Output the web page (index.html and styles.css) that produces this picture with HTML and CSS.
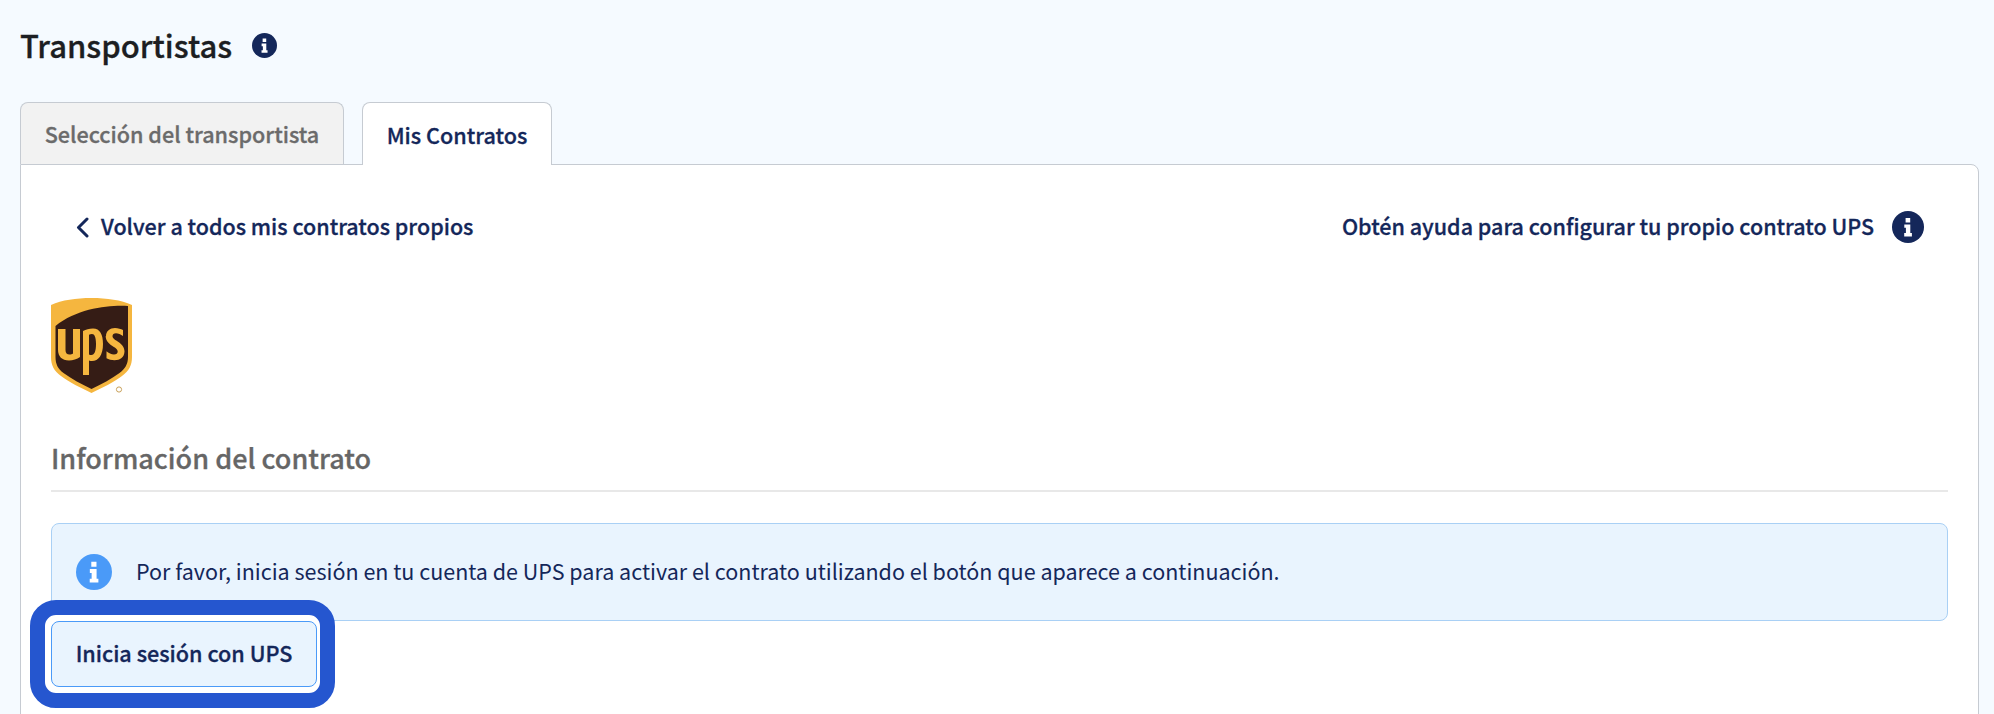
FILE: index.html
```html
<!DOCTYPE html>
<html lang="es">
<head>
<meta charset="utf-8">
<title>Transportistas</title>
<link rel="stylesheet" href="styles.css">
</head>
<body>
<svg class="defs" width="0" height="0" aria-hidden="true">
  <symbol id="info" viewBox="0 0 32 32">
    <circle cx="16" cy="16" r="16" fill="currentColor"/>
    <path fill="#fff" d="M13.6 6.9h4.6v4.5h-4.6zM12.3 13.4h6v8.6h1.6v3.4h-7.7V22h1.7v-5.2h-1.6z"/>
  </symbol>
</svg>
<main class="page">
  <header class="title-row">
    <h1 class="title">Transportistas</h1>
    <svg class="icon-title"><use href="#info"/></svg>
  </header>
  <nav class="tabs">
    <div class="tab">Selección del transportista</div>
    <div class="tab tab-active">Mis Contratos</div>
  </nav>
  <section class="panel">
    <div class="top-row">
      <a class="back">
        <svg class="chevron" viewBox="0 0 14 21"><path d="M12 2 3.500 10.500 12 19" fill="none" stroke="currentColor" stroke-width="3" stroke-linecap="round" stroke-linejoin="round"/></svg>
        <span class="lifted">Volver a todos mis contratos propios</span>
      </a>
      <a class="help">
        <span class="lifted">Obtén ayuda para configurar tu propio contrato UPS</span>
        <svg class="icon-help"><use href="#info"/></svg>
      </a>
    </div>
    <svg class="logo" viewBox="0 0 81 95">
      <path fill="#f5b63f" d="M40.500 0C25 0 11 2 0 7v52c0 8 3 14 10 19 8 6 20 12 30.500 17C51 90 63 84 71 78c7-5 10-11 10-19V7C70 2 56 0 40.500 0z"/>
      <path fill="#351c15" d="M77 8C58 7 27 10 4.500 28v31c0 7 2.500 12 8 16 8 6 18 11 28 16 10-5 20-10 28-16 5.500-4 8.500-9 8.500-16z"/>
      <path fill="#f5b63f" fill-rule="evenodd" d="M7 31h7.500v21c0 3 1.500 4.500 4 4.500 1.500 0 2.500-.3 3.500-1V31H29v28c-3 2-7 3.500-11 3.500-7 0-11-4-11-11zM32 33c3-1.500 6-2.500 10-2.500 7 0 10 6 10 15.500 0 11-4.500 17-11 17-1 0-2 0-3-.5V77h-6zm6 23.500c.8.500 1.500.6 2.500.6 3 0 4.500-4 4.500-11 0-7-1.500-10-4-10-1.200 0-2.200.2-3 .6zM55 38c0-5 4-8 9-8 3 0 6 1 8 2v6c-2-1.500-5-2.800-7-2.800-2.200 0-3.500 1.200-3.500 3 0 4.500 12 6 12 15 0 6-4.500 9-10 9-3 0-6-.7-8-2v-7c2 2 5 3.200 7.500 3.200 2.300 0 3.700-1.200 3.700-3 0-5-12-6-12-15.500z"/>
      <circle cx="68" cy="91.500" r="2.600" fill="none" stroke="#c9a15a" stroke-width="1"/>
    </svg>
    <h2 class="section-title">Información del contrato</h2>
    <div class="alert">
      <svg class="icon-alert"><use href="#info"/></svg>
      <span class="lifted">Por favor, inicia sesión en tu cuenta de UPS para activar el contrato utilizando el botón que aparece a continuación.</span>
    </div>
    <div class="button-wrap">
      <div class="ring"></div>
      <button class="button">Inicia sesión con UPS</button>
    </div>
  </section>
</main>
</body>
</html>
```
FILE: styles.css
```css
* { box-sizing: border-box; }
html, body { margin: 0; height: 100%; }
body {
  background: #f5faff;
  font-family: "Noto Sans CJK JP", "Noto Sans", sans-serif;
  color: #14275a;
  overflow: hidden;
}
.defs { position: absolute; }
.page { padding: 24px 15px 0 20px; }
.title-row { display: flex; align-items: center; gap: 20px; height: 42px; }
.title { margin: 0; font-size: 31px; font-weight: 500; -webkit-text-stroke: 0.3px; color: #1c1e22; line-height: 42px; }
.icon-title { width: 25px; height: 25px; color: #14275a; }
.tabs { display: flex; gap: 18px; margin-top: 36px; }
.tab {
  height: 62px;
  width: 324px;
  border: 1px solid #c6cbd2;
  border-bottom: 0;
  border-radius: 8px 8px 0 0;
  background: #f2f2f2;
  color: #6b6b6b;
  font-size: 21.6px;
  font-weight: 500;
  -webkit-text-stroke: 0.3px;
  display: flex;
  align-items: center;
  justify-content: center;
}
.tab-active {
  width: 190px;
  background: #fff;
  color: #14275a;
  position: relative;
  z-index: 1;
  height: 63px;
  margin-bottom: -1px;
}
.panel {
  background: #fff;
  border: 1px solid #c6cbd2;
  border-radius: 0 8px 0 0;
  padding: 34px 30px 0 30px;
  height: 600px;
}
.top-row {
  display: flex;
  justify-content: space-between;
  align-items: center;
  height: 56px;
  padding: 0 24px;
  font-size: 21.5px;
  font-weight: 500;
  -webkit-text-stroke: 0.3px;
}
.back, .help { display: flex; align-items: center; }
.lifted { padding-bottom: 3px; }
.chevron { width: 14px; height: 21px; margin-right: 12px; }
.icon-help { width: 32px; height: 32px; margin-left: 18px; }
.logo { display: block; width: 81px; height: 95px; margin-top: 43px; }
.section-title {
  margin: 45px 0 0;
  font-size: 27px;
  font-weight: 500;
  -webkit-text-stroke: 0.3px;
  color: #666;
  line-height: 40px;
  padding-bottom: 12px;
  border-bottom: 2px solid #e8e8e8;
}
.alert {
  display: flex;
  align-items: center;
  gap: 24px;
  height: 98px;
  margin-top: 31px;
  padding: 0 24px;
  background: #e9f4fe;
  border: 1px solid #a9d0f5;
  border-radius: 8px;
  font-size: 21.5px;
  font-weight: 400;
}
.icon-alert { width: 36px; height: 36px; color: #4a9af8; flex: none; }
.button-wrap { position: relative; width: 266px; }
.button {
  display: block;
  position: relative;
  width: 266px;
  height: 66px;
  padding: 0 0 3px;
  background: #e9f4fe;
  border: 1px solid #4a9af8;
  border-radius: 8px;
  font: 500 21.6px "Noto Sans CJK JP", "Noto Sans", sans-serif;
  -webkit-text-stroke: 0.3px;
  color: #14275a;
}
.ring {
  position: absolute;
  left: -21px;
  top: -21px;
  width: 305px;
  height: 108px;
  background: #fff;
  border: 15px solid #2556cf;
  border-radius: 26px;
}
```
